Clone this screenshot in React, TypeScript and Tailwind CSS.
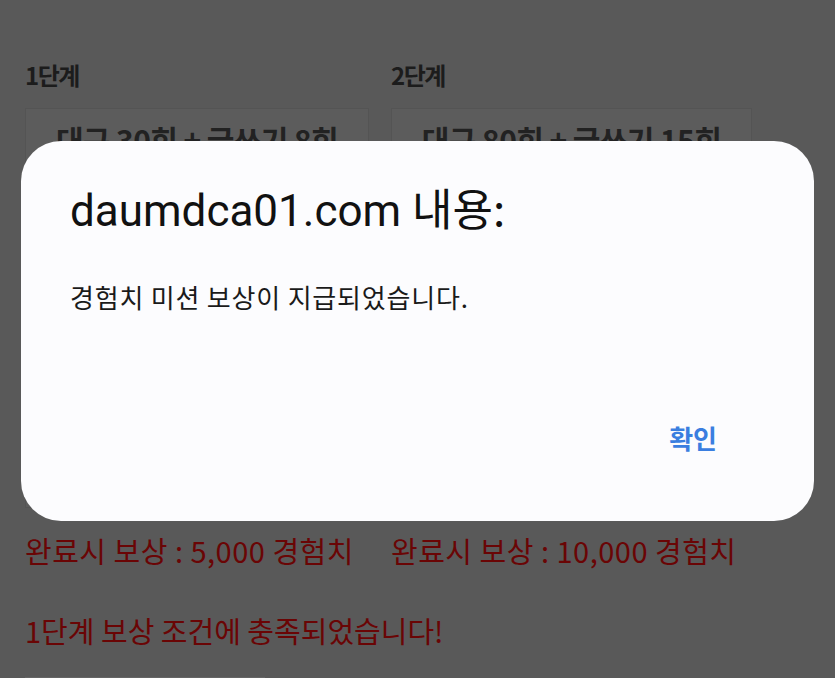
export default function App() {
  return (
    <div className="relative h-[678px] w-[835px] overflow-hidden bg-[#595959] font-['Noto_Sans_CJK_KR',sans-serif]">
      {/* dimmed page */}
      <div className="px-[25px] pt-[58px]">
        <div className="flex gap-[22px]">
          <Stage title="1단계" task="대구 30회 + 글쓰기 8회" reward="완료시 보상 : 5,000 경험치" w="w-[344px]" />
          <Stage title="2단계" task="대구 80회 + 글쓰기 15회" reward="완료시 보상 : 10,000 경험치" w="w-[361px]" />
        </div>
        <p className="mt-[40px] text-[29px] leading-[40px] text-[#6a0505]">1단계 보상 조건에 충족되었습니다!</p>
        <div className="mt-[27px] h-10 w-[240px] border-t border-[#666] bg-[#5d5d5d]" />
      </div>

      {/* alert dialog */}
      <div className="absolute left-[21px] top-[141px] flex h-[380px] w-[793px] flex-col rounded-[40px] bg-[#fcfcfe] px-[49px] pt-[38px]">
        <h1 className="font-['Roboto',sans-serif] text-[44px] leading-[56px] text-[#111]">
          daumdca01.com <span className="font-['Noto_Sans_CJK_KR',sans-serif]">내용:</span>
        </h1>
        <p className="mt-[40px] text-[26px] leading-[36px] tracking-[0.8px] text-[#1a1a1a]">경험치 미션 보상이 지급되었습니다.</p>
        <div className="mb-[65px] mt-auto flex justify-end pr-[48px]">
          <button type="button" className="text-[26px] font-semibold leading-[36px] text-[#3a7ee0]">확인</button>
        </div>
      </div>
    </div>
  )
}

function Stage({ title, task, reward, w }: { title: string; task: string; reward: string; w: string }) {
  return (
    <div className={w}>
      <h2 className="text-[24px] font-bold leading-[34px] tracking-[-1.5px] text-[#1c1c1c]">{title}</h2>
      <div className="mt-[16px] h-[400px] border border-[#545454] bg-[#5c5c5c] pt-[8px] text-center">
        <span className="text-[30px] font-bold tracking-[-0.6px] text-[#222]">{task}</span>
      </div>
      <p className="mt-[22px] whitespace-nowrap text-[29px] leading-[40px] tracking-[0.5px] text-[#6a0505]">{reward}</p>
    </div>
  )
}
